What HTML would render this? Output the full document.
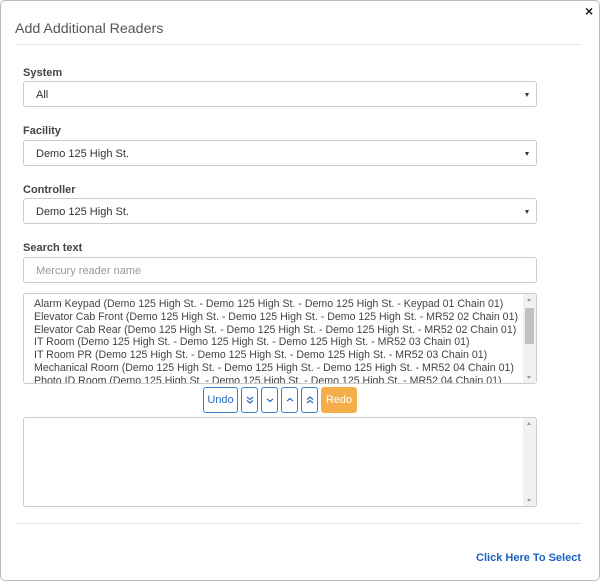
<!DOCTYPE html>
<html><head><style>
*{box-sizing:border-box}
body{margin:0;width:600px;height:581px;background:#fff;font-family:"Liberation Sans",Arial,sans-serif;overflow:hidden;position:relative}
.modal{position:absolute;left:0;top:0;width:600px;height:581px;border:1px solid #bbb;border-radius:5px;background:#fff}
.abs{position:absolute}
.title{left:14px;top:20px;font-size:14.2px;color:#555}
.hr{left:14px;width:567px;height:1px;background:#e8e8e8}
.lbl{left:22px;font-size:11px;font-weight:bold;color:#444}
.sel{left:22px;width:514px;height:26px;border:1px solid #ccc;border-radius:3px;font-size:11px;color:#333;padding:7px 12px}
.arr:after{content:"";position:absolute;right:7px;top:11px;border-left:2.5px solid transparent;border-right:2.5px solid transparent;border-top:4px solid #333}
.list{left:22px;top:292px;width:514px;height:91px;border:1px solid #ccc;border-radius:3px;overflow:hidden;font-size:10.6px;color:#444;line-height:12.8px;padding:4px 10px;white-space:nowrap}
.sb{position:absolute;right:0;top:0;width:13px;height:100%;background:#f1f1f1}
.up{position:absolute;left:4px;top:4px;border-left:2.5px solid transparent;border-right:2.5px solid transparent;border-bottom:3px solid #999}
.dn{position:absolute;left:4px;bottom:4px;border-left:2.5px solid transparent;border-right:2.5px solid transparent;border-top:3px solid #999}
.btn{top:386px;height:26px;border:1px solid #3a7dcc;border-radius:3px;color:#2a6bc0;font-size:11px;text-align:center;line-height:24px}
.btn svg{position:absolute;left:4px;top:8px}
</style></head><body>
<div class="modal">
<div class="abs" style="left:584px;top:2px;font-size:14px;font-weight:bold;color:#222">×</div>
<div class="abs title">Add Additional Readers</div>
<div class="abs hr" style="top:43px"></div>
<div class="abs lbl" style="top:66px">System</div>
<div class="abs sel arr" style="top:80px">All</div>
<div class="abs lbl" style="top:124px">Facility</div>
<div class="abs sel arr" style="top:139px">Demo 125 High St.</div>
<div class="abs lbl" style="top:183px">Controller</div>
<div class="abs sel arr" style="top:197px">Demo 125 High St.</div>
<div class="abs lbl" style="top:241px">Search text</div>
<div class="abs sel" style="top:256px;color:#999">Mercury reader name</div>
<div class="abs list"><div class="sb"><div class="up"></div><div style="position:absolute;left:2px;top:14px;width:9px;height:36px;background:#c1c1c1"></div><div class="dn"></div></div>
Alarm Keypad (Demo 125 High St. - Demo 125 High St. - Demo 125 High St. - Keypad 01 Chain 01)<br>
Elevator Cab Front (Demo 125 High St. - Demo 125 High St. - Demo 125 High St. - MR52 02 Chain 01)<br>
Elevator Cab Rear (Demo 125 High St. - Demo 125 High St. - Demo 125 High St. - MR52 02 Chain 01)<br>
IT Room (Demo 125 High St. - Demo 125 High St. - Demo 125 High St. - MR52 03 Chain 01)<br>
IT Room PR (Demo 125 High St. - Demo 125 High St. - Demo 125 High St. - MR52 03 Chain 01)<br>
Mechanical Room (Demo 125 High St. - Demo 125 High St. - Demo 125 High St. - MR52 04 Chain 01)<br>
Photo ID Room (Demo 125 High St. - Demo 125 High St. - Demo 125 High St. - MR52 04 Chain 01)</div>
<div class="abs btn" style="left:202px;width:35px">Undo</div>
<div class="abs btn" style="left:240px;width:17px"><svg width="8" height="8"><path d="M1 1l3 2.5l3-2.5M1 4.5l3 2.5l3-2.5" stroke="#2a6bc0" stroke-width="1.2" fill="none"/></svg></div>
<div class="abs btn" style="left:260px;width:17px"><svg width="8" height="8"><path d="M1 3l3 2.5l3-2.5" stroke="#2a6bc0" stroke-width="1.2" fill="none"/></svg></div>
<div class="abs btn" style="left:280px;width:17px"><svg width="8" height="8"><path d="M1 5l3-2.5l3 2.5" stroke="#2a6bc0" stroke-width="1.2" fill="none"/></svg></div>
<div class="abs btn" style="left:300px;width:17px"><svg width="8" height="8"><path d="M1 3.5l3-2.5l3 2.5M1 7l3-2.5l3 2.5" stroke="#2a6bc0" stroke-width="1.2" fill="none"/></svg></div>
<div class="abs btn" style="left:320px;width:36px;background:#f5ad4c;border-color:#f5ad4c;color:#fff">Redo</div>
<div class="abs list" style="top:416px;height:90px"><div class="sb"><div class="up"></div><div class="dn"></div></div></div>
<div class="abs hr" style="top:522px"></div>
<div class="abs" style="right:18px;top:551px;font-size:11px;font-weight:bold;color:#1a62c4">Click Here To Select</div>
</div>
</body></html>
